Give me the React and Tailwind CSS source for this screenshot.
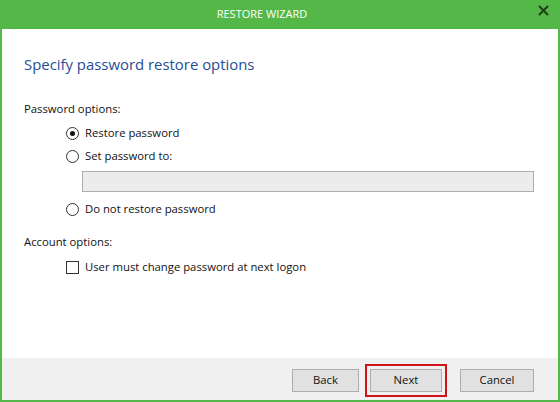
export default function App() {
  return (
    <div className="w-[560px] h-[402px] flex flex-col bg-[#54b848] text-[11.3px] text-[#111] font-['Open_Sans',sans-serif]">
      {/* Title bar */}
      <div className="h-[29px] shrink-0 flex items-center justify-center relative pr-[36px] text-white text-[11px]">
        RESTORE WIZARD
        <span className="absolute right-[11px] top-[5px]">
          <svg width="11" height="11" viewBox="0 0 11 11">
            <path d="M1 1L10 10M10 1L1 10" stroke="#1d3d17" strokeWidth="2" />
          </svg>
        </span>
      </div>

      {/* Body */}
      <div className="flex-1 mx-[2px] mb-[2px] bg-white flex flex-col">
        <div className="flex-1 pl-[22px] pr-[24px]">
          <h1 className="mt-[25px] text-[14.9px] text-[#1f4e96] leading-[20px]">Specify password restore options</h1>

          <div className="mt-[27px] leading-[16px]">Password options:</div>
          <div className="pl-[42px] flex flex-col">
            <label className="mt-[8px] flex items-center gap-[6px] h-[16px]">
              <span className="w-[13px] h-[13px] rounded-full border border-[#333] flex items-center justify-center">
                <span className="w-[5px] h-[5px] rounded-full bg-[#111]" />
              </span>
              Restore password
            </label>
            <label className="mt-[7px] flex items-center gap-[6px] h-[16px]">
              <span className="w-[13px] h-[13px] rounded-full border border-[#333]" />
              Set password to:
            </label>
            <div className="mt-[7px] ml-[16px] h-[21px] bg-[#ececec] border border-[#adadad]" />
            <label className="mt-[9px] flex items-center gap-[6px] h-[16px]">
              <span className="w-[13px] h-[13px] rounded-full border border-[#333]" />
              Do not restore password
            </label>
          </div>

          <div className="mt-[17px] leading-[16px]">Account options:</div>
          <div className="pl-[42px]">
            <label className="mt-[9px] flex items-center gap-[6px] h-[16px]">
              <span className="w-[13px] h-[13px] border border-[#333] bg-white" />
              User must change password at next logon
            </label>
          </div>
        </div>

        {/* Footer */}
        <div className="h-[42px] shrink-0 bg-[#f0f0f0] flex items-center justify-end pr-[24px] pt-[3px]">
          <button className="w-[67px] h-[23px] bg-[#e1e1e1] border border-[#adadad] text-[11.3px]">Back</button>
          <div className="ml-[6px] border-2 border-[#d0121b] p-[3px]">
            <button className="w-[72px] h-[23px] bg-[#e1e1e1] border border-[#adadad] text-[11.3px] block">Next</button>
          </div>
          <button className="ml-[13px] w-[74px] h-[23px] bg-[#e1e1e1] border border-[#adadad] text-[11.3px]">Cancel</button>
        </div>
      </div>
    </div>
  );
}
